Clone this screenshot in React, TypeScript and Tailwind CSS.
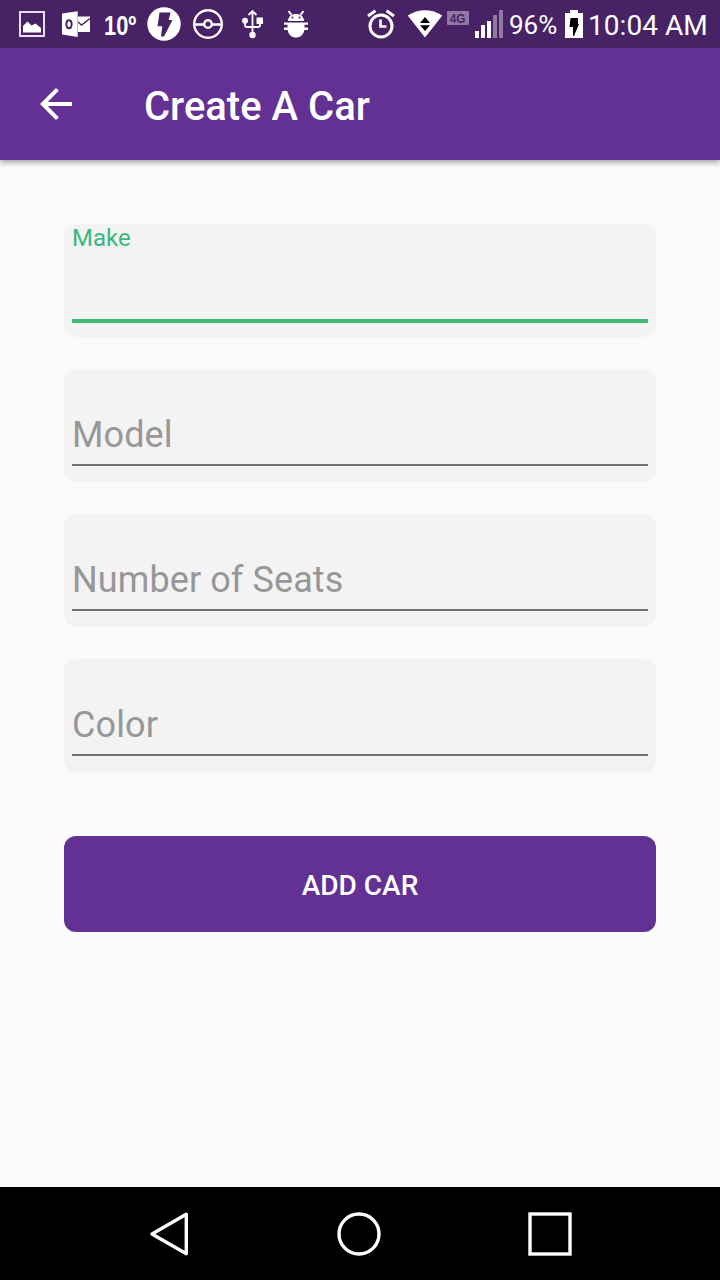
import React from "react";

function NotificationIcons() {
  return (
    <>
      <svg className="ml-[19px] h-12 w-[26px] shrink-0" viewBox="19 0 26 48" fill="none">
        <rect x="20" y="12" width="24" height="24" stroke="#e8e0ee" strokeWidth="2" />
        <path d="M23 32.5V26L27.5 21.5L31.5 25.5L35.5 23.5L41 28V32.5Z" fill="#fff" />
      </svg>
      <svg className="ml-4 h-12 w-[30px] shrink-0" viewBox="61 0 30 48">
        <path d="M78 16.5H90V32H78Z" fill="#fff" />
        <path d="M78 22L81.5 25L90 18.5" fill="none" stroke="#472366" strokeWidth="1.4" />
        <path d="M62 13.5L77.7 11.3V37L62 34.5Z" fill="#fff" />
        <ellipse cx="69" cy="24.3" rx="2.6" ry="4" fill="none" stroke="#472366" strokeWidth="2" />
      </svg>
      <span className="ml-[13px] mt-[4px] w-[33px] shrink-0">
        <span className="block origin-left scale-x-[0.78] font-['Liberation_Sans'] text-[28px] leading-12 font-bold">10º</span>
      </span>
      <svg className="ml-[10px] h-12 w-[34px] shrink-0" viewBox="147 0 34 48">
        <circle cx="164" cy="24" r="16.7" fill="#fff" />
        <path d="M159.5 12.5H170.5L168.7 20H172.5L164 36.5H161L162.3 26.2H157.5Z" fill="#472366" />
      </svg>
      <svg className="ml-3 h-12 w-[30px] shrink-0" viewBox="193 0 30 48" fill="none" stroke="#fff">
        <circle cx="208" cy="24" r="13.8" strokeWidth="2.4" />
        <path d="M194 24.5H204M212 24.5H222" strokeWidth="2.7" />
        <circle cx="208" cy="24" r="3.8" strokeWidth="2.4" />
      </svg>
      <svg className="ml-[18px] h-12 w-[24px] shrink-0" viewBox="241 0 24 48">
        <path d="M252.5 35V11M248.5 15L252.5 11L256.5 15M245 21V25.3Q245 27 247 27H258Q260 27 260 25V21" fill="none" stroke="#fff" strokeWidth="1.8" />
        <circle cx="245" cy="20.7" r="3" fill="#fff" />
        <rect x="256.5" y="17.5" width="6.5" height="6.5" fill="#fff" />
        <circle cx="252.5" cy="35" r="3.2" fill="#fff" />
      </svg>
      <svg className="ml-[19px] h-12 w-[24px] shrink-0" viewBox="284 0 24 48">
        <path d="M288.5 11L291.5 15M303.5 11L300.5 15" stroke="#fff" strokeWidth="2" />
        <path d="M288 21C288 11.5 304 11.5 304 21Z" fill="#fff" />
        <circle cx="292.5" cy="17.5" r="1" fill="#472366" />
        <circle cx="299.5" cy="17.5" r="1" fill="#472366" />
        <path d="M284 22.4H308V24.7H304.5V27.5H308V30H304.3C303 40 289 40 287.7 30H284V27.5H287.5V24.7H284Z" fill="#fff" />
      </svg>
    </>
  );
}

function SystemIcons() {
  return (
    <>
      <svg className="ml-[59px] h-12 w-[28px] shrink-0" viewBox="367 0 28 48" fill="none" stroke="#fff">
        <circle cx="381" cy="26" r="11" strokeWidth="3" />
        <path d="M368 16L375.5 10.8M394 16L386.5 10.8" strokeWidth="3" />
        <path d="M380.5 19.5V26.5H386.5" strokeWidth="2.6" />
      </svg>
      <svg className="ml-3 h-12 w-[36px] shrink-0" viewBox="407 0 36 48">
        <path d="M407.7 15.5Q425 4.8 442.3 15.5L425 37.5Z" fill="#fff" />
        <path d="M420 23L425 17L430 23ZM420 25.3H430L425 31Z" fill="#000" />
      </svg>
      <span className="ml-1 mb-[12px] flex h-[14px] w-[22px] shrink-0 items-center justify-center rounded-[1px] bg-[#9278a5] font-['Liberation_Sans'] text-[13px] leading-none font-bold text-[#472366]">
        <span className="scale-x-90">4G</span>
      </span>
      <svg className="ml-[6px] h-12 w-[28px] shrink-0" viewBox="475 0 28 48" fill="#fff">
        <path d="M475 31H479V38H475ZM481 25H485V38H481ZM487 21H491V38H487Z" />
        <path d="M493 15H497V38H493ZM499 10H503V38H499Z" fill="#9278a5" />
      </svg>
      <span className="ml-[6px] mt-[2px] w-[56px] shrink-0 text-[26px] leading-12">96%</span>
      <svg className="h-12 w-[18px] shrink-0" viewBox="565 0 18 48">
        <path d="M565 13H570V10H578V13H583V38H565Z" fill="#fff" />
        <path d="M570.5 18H578V24H579L574 36H573V27H569.5Z" fill="#000" />
      </svg>
      <span className="ml-[5px] mt-[3px] shrink-0 whitespace-nowrap text-[28px] leading-12 tracking-[0.05px]">10:04 AM</span>
    </>
  );
}

function Field({ label, active = false }: { label: string; active?: boolean }) {
  return (
    <label className="flex h-[113px] flex-col rounded-xl bg-[#f3f3f3] px-2">
      {active ? (
        <>
          <span className="h-[95px] text-[24px] leading-7 text-[#3cb878]">{label}</span>
          <span className="h-1 bg-[#3cb878]" />
        </>
      ) : (
        <>
          <span className="h-[95px] pt-[45px] text-[36px] leading-[42px] tracking-[0.1px] text-[#979797]">{label}</span>
          <span className="h-[2px] bg-[#717171]" />
        </>
      )}
    </label>
  );
}

export default function App() {
  return (
    <div className="flex h-[1280px] w-[720px] flex-col overflow-hidden bg-[#fafafa] font-[Roboto,sans-serif]">
      <div className="relative z-10 flex h-12 shrink-0 items-center overflow-hidden bg-[#472366] text-white">
        <NotificationIcons />
        <SystemIcons />
      </div>
      <header className="flex h-28 shrink-0 items-center bg-[#633193] text-white shadow-[0_2px_6px_rgba(0,0,0,0.4)]">
        <svg className="ml-10 h-28 w-8 shrink-0" viewBox="40 0 32 112" fill="none" stroke="#fff" strokeWidth="4">
          <path d="M72 56H43M57.4 41.4L42.8 56L57.4 70.6" />
        </svg>
        <h1 className="ml-[72px] mt-[6px] text-[40px] leading-[48px] font-medium">Create A Car</h1>
      </header>
      <main className="flex grow flex-col px-16 pt-16">
        <div className="flex flex-col gap-8">
          <Field label="Make" active />
          <Field label="Model" />
          <Field label="Number of Seats" />
          <Field label="Color" />
        </div>
        <button className="mt-16 h-24 rounded-xl bg-[#633193] pt-[3px] text-[28px] font-medium text-white">ADD CAR</button>
      </main>
      <nav className="flex h-[93px] shrink-0 items-center bg-black">
        <svg className="ml-[149px] h-[46px] w-[40px]" viewBox="149 1211 40 46" fill="none" stroke="#fff" strokeWidth="3.4">
          <path d="M186.3 1214.3V1253.7L152 1234Z" strokeLinejoin="round" />
        </svg>
        <svg className="ml-[147px] h-[46px] w-[46px]" viewBox="336 1211 46 46" fill="none" stroke="#fff" strokeWidth="3.4">
          <circle cx="359" cy="1234" r="20" />
        </svg>
        <svg className="ml-[145px] h-[46px] w-[46px]" viewBox="527 1211 46 46" fill="none" stroke="#fff" strokeWidth="3.4">
          <rect x="530" y="1214" width="40" height="40" />
        </svg>
      </nav>
    </div>
  );
}
